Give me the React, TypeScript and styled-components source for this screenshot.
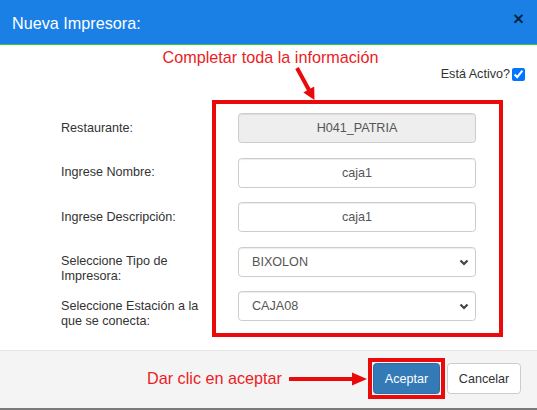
import React from "react";
import styled, { createGlobalStyle } from "styled-components";

const GlobalStyle = createGlobalStyle`
  html, body { margin: 0; padding: 0; background: #ffffff; }
  body { font-family: "Liberation Sans", Arial, sans-serif; }
  * { box-sizing: border-box; }
`;

const Dialog = styled.div`
  width: 537px;
  height: 410px;
  display: flex;
  flex-direction: column;
  background: #fff;
  overflow: hidden;
`;

const Header = styled.div`
  height: 45px;
  flex: none;
  display: flex;
  align-items: flex-start;
  justify-content: space-between;
  padding: 10px 13px 0 12px;
  background: #1a80e6;
  border-bottom: 1px solid #2ecc40;
`;

const Title = styled.h4`
  margin: 5px 0 0 0;
  font-size: 16.2px;
  line-height: 17px;
  font-weight: normal;
  color: #ffffff;
`;

const Close = styled.button`
  border: 0;
  background: transparent;
  padding: 0;
  font-family: "Liberation Sans", Arial, sans-serif;
  font-size: 18.9px;
  line-height: 1;
  font-weight: bold;
  color: rgba(0, 0, 0, 0.72);
  cursor: pointer;
`;

const Body = styled.div`
  position: relative;
  flex: none;
  height: 305px;
  padding-top: 4px;
  display: flex;
  flex-direction: column;
`;

const Annotation = styled.div<{ $size?: number }>`
  color: #ec1c24;
  font-size: ${(p) => p.$size ?? 16.2}px;
  line-height: 17px;
  white-space: nowrap;
`;

const TopNote = styled(Annotation)`
  text-align: center;
  padding-left: 4px;
`;

const ActiveRow = styled.label`
  display: flex;
  justify-content: flex-end;
  align-items: center;
  padding-right: 12px;
  font-size: 12.6px;
  line-height: 16px;
  color: #333;
`;

const Check = styled.input`
  width: 13px;
  height: 13px;
  margin: 0 0 0 2px;
  accent-color: #0075ff;
`;

const DownArrow = styled.svg`
  position: absolute;
  left: 288px;
  top: 17px;
  overflow: visible;
`;

const FormGrid = styled.div`
  margin-top: 31px;
  display: grid;
  grid-template-columns: 151px 291px;
  grid-auto-rows: 30px;
  row-gap: 14.5px;
  padding-left: 61px;
`;

const RedFrame = styled.div`
  grid-column: 2;
  grid-row: 1 / 6;
  margin: -13px 0 -16px 0;
  border: 4px solid #ea0a0a;
  pointer-events: none;
`;

const Label = styled.div<{ $row: number }>`
  grid-column: 1;
  grid-row: ${(p) => p.$row};
  padding-top: 7.5px;
  font-size: 12.6px;
  line-height: 15px;
  color: #333;
`;

const FieldBox = styled.div<{ $row: number }>`
  grid-column: 2;
  grid-row: ${(p) => p.$row};
  margin: 0 27px 0 26px;
  position: relative;
  z-index: 1;
`;

const TextInput = styled.input`
  width: 100%;
  height: 30px;
  border: 1px solid #ccc;
  border-radius: 3.6px;
  box-shadow: inset 0 1px 1px rgba(0, 0, 0, 0.075);
  background: #fff;
  font-family: "Liberation Sans", Arial, sans-serif;
  font-size: 12.6px;
  color: #555;
  text-align: center;
  padding: 0 11px;
  outline: none;
  &:disabled {
    background: #eeeeee;
    color: #555;
    opacity: 1;
    -webkit-text-fill-color: #555;
  }
`;

const Select = styled.select`
  width: 100%;
  height: 30px;
  border: 1px solid #ccc;
  border-radius: 3.6px;
  box-shadow: inset 0 1px 1px rgba(0, 0, 0, 0.075);
  background: #fff;
  font-family: "Liberation Sans", Arial, sans-serif;
  font-size: 12.6px;
  color: #555;
  padding: 0 24px 0 13px;
  appearance: none;
  -webkit-appearance: none;
  outline: none;
`;

const Chevron = styled.svg`
  position: absolute;
  right: 7px;
  top: 12px;
  pointer-events: none;
`;

const Footer = styled.div`
  flex: none;
  height: 60px;
  display: flex;
  align-items: center;
  justify-content: flex-end;
  padding: 0 16px 2px 0;
  background: #f4f4f4;
  border-top: 1px solid #e5e5e5;
  border-bottom: 2px solid #7a7a7a;
`;

const SideArrow = styled.svg`
  margin: 0 1px 0 7px;
  flex: none;
`;

const ButtonFrame = styled.div`
  border: 4px solid #ea0a0a;
  padding: 1px;
  display: flex;
  margin-right: 2px;
`;

const Button = styled.button<{ $primary?: boolean }>`
  height: 31px;
  padding: 0 10.8px;
  border-radius: 3.6px;
  font-family: "Liberation Sans", Arial, sans-serif;
  font-size: 12.6px;
  line-height: 18px;
  cursor: pointer;
  border: 1px solid ${(p) => (p.$primary ? "#2e6da4" : "#cccccc")};
  background: ${(p) => (p.$primary ? "#337ab7" : "#ffffff")};
  color: ${(p) => (p.$primary ? "#ffffff" : "#333333")};
`;

const ChevronIcon = () => (
  <Chevron width="10" height="7" viewBox="0 0 10 7">
    <path d="M1.5 1.5 L5 5 L8.5 1.5" fill="none" stroke="#444" strokeWidth="2.2" />
  </Chevron>
);

export default function App() {
  return (
    <>
      <GlobalStyle />
      <Dialog>
        <Header>
          <Title>Nueva Impresora:</Title>
          <Close aria-label="Cerrar">×</Close>
        </Header>
        <Body>
          <TopNote>Completar toda la información</TopNote>
          <ActiveRow>
            Está Activo?
            <Check type="checkbox" defaultChecked />
          </ActiveRow>
          <DownArrow width="34" height="42" viewBox="0 0 34 42">
            <line x1="9" y1="6" x2="21" y2="28" stroke="#ea0a0a" strokeWidth="4" />
            <polygon points="15.3,30.6 26.5,38 26.2,24.6" fill="#ea0a0a" />
          </DownArrow>
          <FormGrid>
            <RedFrame />
            <Label $row={1}>Restaurante:</Label>
            <FieldBox $row={1}>
              <TextInput disabled value="H041_PATRIA" readOnly />
            </FieldBox>
            <Label $row={2}>Ingrese Nombre:</Label>
            <FieldBox $row={2}>
              <TextInput defaultValue="caja1" />
            </FieldBox>
            <Label $row={3}>Ingrese Descripción:</Label>
            <FieldBox $row={3}>
              <TextInput defaultValue="caja1" />
            </FieldBox>
            <Label $row={4}>
              Seleccione Tipo de
              <br />
              Impresora:
            </Label>
            <FieldBox $row={4}>
              <Select defaultValue="BIXOLON">
                <option>BIXOLON</option>
              </Select>
              <ChevronIcon />
            </FieldBox>
            <Label $row={5}>
              Seleccione Estación a la
              <br />
              que se conecta:
            </Label>
            <FieldBox $row={5}>
              <Select defaultValue="CAJA08">
                <option>CAJA08</option>
              </Select>
              <ChevronIcon />
            </FieldBox>
          </FormGrid>
        </Body>
        <Footer>
          <Annotation>Dar clic en aceptar</Annotation>
          <SideArrow width="78" height="16" viewBox="0 0 78 16">
            <line x1="1" y1="8" x2="66" y2="8" stroke="#ea0a0a" strokeWidth="4" strokeLinecap="round" />
            <polygon points="63,1.5 78,8 63,14.5" fill="#ea0a0a" />
          </SideArrow>
          <ButtonFrame>
            <Button $primary>Aceptar</Button>
          </ButtonFrame>
          <Button>Cancelar</Button>
        </Footer>
      </Dialog>
    </>
  );
}
